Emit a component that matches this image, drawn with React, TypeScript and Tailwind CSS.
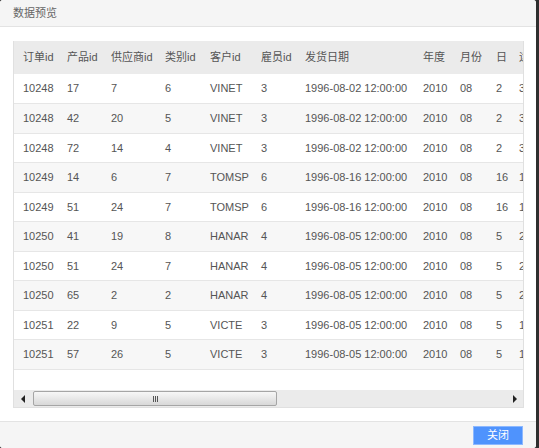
const font = { fontFamily: '"Liberation Sans", "Noto Sans CJK SC", sans-serif' };

type Row = [string, string, string, string, string, string, string, string, string, string, string];

const dates = {
  a: "1996-08-02 12:00:00",
  b: "1996-08-16 12:00:00",
  c: "1996-08-05 12:00:00",
};

const rows: Row[] = [
  ["10248", "17", "7", "6", "VINET", "3", dates.a, "2010", "08", "2", "3"],
  ["10248", "42", "20", "5", "VINET", "3", dates.a, "2010", "08", "2", "3"],
  ["10248", "72", "14", "4", "VINET", "3", dates.a, "2010", "08", "2", "3"],
  ["10249", "14", "6", "7", "TOMSP", "6", dates.b, "2010", "08", "16", "1"],
  ["10249", "51", "24", "7", "TOMSP", "6", dates.b, "2010", "08", "16", "1"],
  ["10250", "41", "19", "8", "HANAR", "4", dates.c, "2010", "08", "5", "2"],
  ["10250", "51", "24", "7", "HANAR", "4", dates.c, "2010", "08", "5", "2"],
  ["10250", "65", "2", "2", "HANAR", "4", dates.c, "2010", "08", "5", "2"],
  ["10251", "22", "9", "5", "VICTE", "3", dates.c, "2010", "08", "5", "1"],
  ["10251", "57", "26", "5", "VICTE", "3", dates.c, "2010", "08", "5", "1"],
];

const headers = ["订单id", "产品id", "供应商id", "类别id", "客户id", "雇员id", "发货日期", "年度", "月份", "日", "运货商id"];
const widths = [43, 44, 54, 45, 51, 44, 118, 37, 36, 23, 70];

function ScrollBar() {
  return (
    <div className="flex h-[17px] shrink-0 items-center bg-[#ebebeb]">
      <div className="flex h-full w-[17px] items-center justify-center">
        <div className="h-0 w-0 border-y-[4px] border-r-[4px] border-y-transparent border-r-[#222]" />
      </div>
      <div className="ml-[2px] flex h-[15px] w-[244px] items-center justify-center rounded-[2px] border border-[#a5a5a5] bg-gradient-to-b from-[#f7f7f7] to-[#d8d8d8]">
        <div className="flex gap-[1px]">
          <span className="h-[6px] w-[1px] bg-[#555]" />
          <span className="h-[6px] w-[1px] bg-[#555]" />
          <span className="h-[6px] w-[1px] bg-[#555]" />
        </div>
      </div>
      <div className="flex-1" />
      <div className="flex h-full w-[17px] items-center justify-center">
        <div className="h-0 w-0 border-y-[4px] border-l-[4px] border-y-transparent border-l-[#222]" />
      </div>
    </div>
  );
}

export default function App() {
  return (
    <div className="flex h-[448px] w-[539px] bg-[#2e2e2e]" style={font}>
      <div className="flex h-full w-[536px] flex-col overflow-hidden rounded-[3px] bg-white">
        {/* Title */}
        <div className="flex h-[27px] shrink-0 items-center border-b border-[#e3e3e3] bg-[#f5f5f5] px-[13px] text-[11px] text-[#666]">
          数据预览
        </div>

        {/* Body */}
        <div className="flex-1 px-[13px] pt-[14px]">
          <div className="flex h-[367px] w-[511px] flex-col overflow-hidden border-x border-b border-[#e0e0e0]">
            <div className="flex-1 overflow-hidden">
              <table className="w-[565px] table-fixed border-collapse text-[11px] text-[#555]">
                <colgroup>
                  {widths.map((w, i) => (
                    <col key={i} style={{ width: w }} />
                  ))}
                </colgroup>
                <thead>
                  <tr className="h-[33px] bg-[#ebebeb]">
                    {headers.map((h, i) => (
                      <th key={h} className={`whitespace-nowrap text-left font-normal ${i === 0 ? "pl-[9px]" : "pl-[10px]"}`}>
                        {h}
                      </th>
                    ))}
                  </tr>
                </thead>
                <tbody>
                  {rows.map((r, ri) => (
                    <tr key={ri} className={`h-[29.5px] border-b border-[#e6e6e6] ${ri % 2 === 1 ? "bg-[#f7f7f7]" : "bg-white"}`}>
                      {r.map((c, ci) => (
                        <td key={ci} className={`whitespace-nowrap ${ci === 0 ? "pl-[9px]" : "pl-[10px]"}`}>
                          {c}
                        </td>
                      ))}
                    </tr>
                  ))}
                </tbody>
              </table>
            </div>
            <ScrollBar />
          </div>
        </div>

        {/* Footer */}
        <div className="flex h-[27px] shrink-0 items-center justify-end border-t border-[#e3e3e3] bg-[#f5f5f5] pr-[13px]">
          <button className="flex h-[19px] w-[50px] items-center justify-center border border-[#8cb8ff] bg-[#4f93fd] text-[11px] text-white">
            关闭
          </button>
        </div>
      </div>
    </div>
  );
}
